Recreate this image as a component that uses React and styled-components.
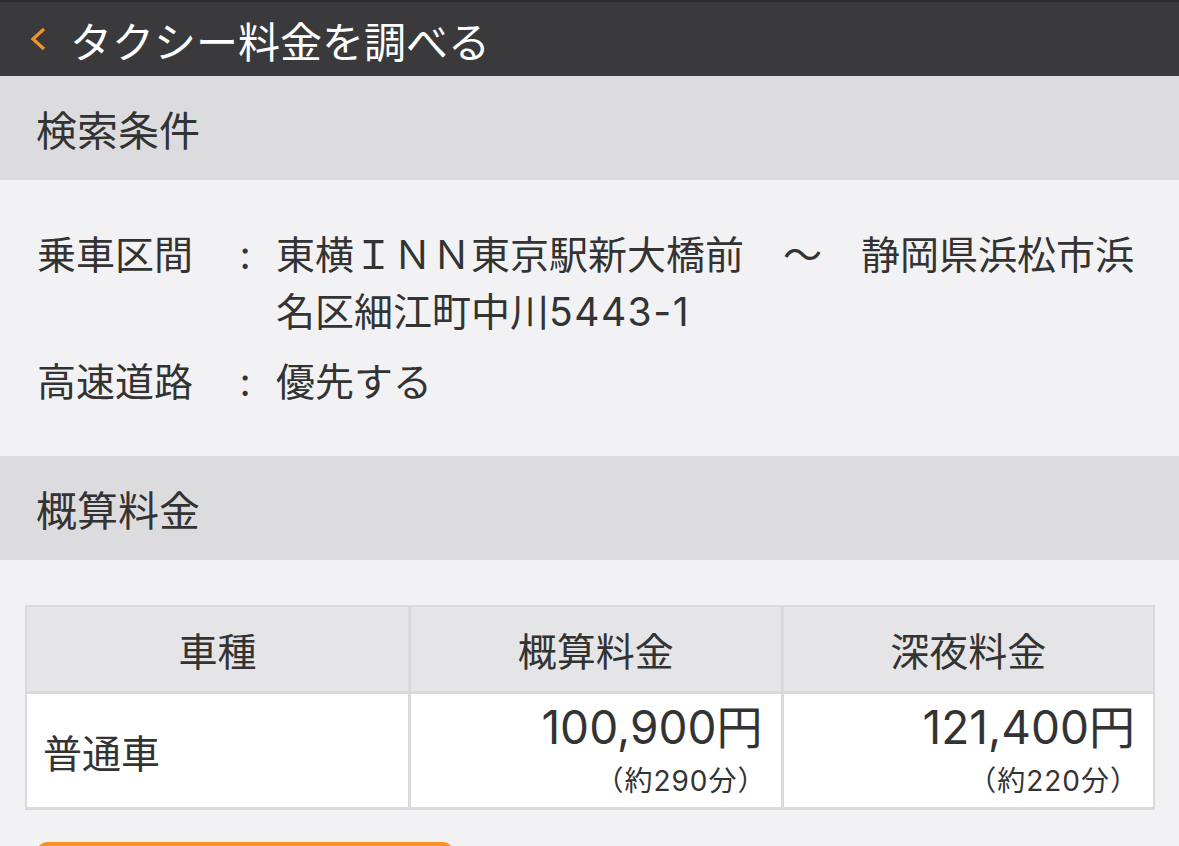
import React from 'react';
import styled, { createGlobalStyle } from 'styled-components';

const GlobalStyle = createGlobalStyle`
  html, body {
    margin: 0;
    padding: 0;
    background: #f2f2f4;
    font-family: Inter, "Noto Sans CJK JP", "Noto Sans", sans-serif;
    color: #333;
  }
`;

const Page = styled.div`
  width: 1179px;
  height: 846px;
  background: #f2f2f4;
  overflow: hidden;
`;

const TopBar = styled.header`
  height: 74px;
  display: flex;
  align-items: center;
  padding-left: 28px;
  background: #3a3a3c;
  border-top: 2px solid #2c2c2e;
`;

const BackIcon = styled.svg`
  width: 22px;
  height: 26px;
  margin-right: 20px;
`;

const Title = styled.h1`
  margin: 0;
  font-size: 42px;
  font-weight: 400;
  color: #fff;
`;

const SectionHeader = styled.div`
  height: ${p => p.$h}px;
  display: flex;
  align-items: center;
  padding-left: 36px;
  background: #dcdcde;
  font-size: 41px;
  color: #333;
`;

const Conditions = styled.div`
  padding: 46px 37px 46px 37px;
  display: flex;
  flex-direction: column;
  gap: 13px;
`;

const CondRow = styled.div`
  display: flex;
  font-size: 39px;
  line-height: 57px;
`;

const CondLabel = styled.div`
  width: 189px;
  flex-shrink: 0;
`;

const Colon = styled.div`
  width: 38px;
  margin-right: 12px;
  text-align: center;
  flex-shrink: 0;
`;

const CondValue = styled.div`
  flex: 1;
`;

const Digits = styled.span`
  letter-spacing: 1.5px;
`;

const FareArea = styled.div`
  padding: 45px 24px 0 25px;
`;

const Table = styled.div`
  display: grid;
  grid-template-columns: 381px 1fr 1fr;
  gap: 3px;
  padding: 2px 2px 3px 2px;
  background: #dadadc;
`;

const HeadCell = styled.div`
  height: 84px;
  display: flex;
  align-items: center;
  justify-content: center;
  background: #e5e5e7;
  font-size: 39px;
`;

const BodyCell = styled.div`
  height: 113px;
  display: flex;
  flex-direction: column;
  justify-content: ${p => (p.$price ? 'flex-start' : 'center')};
  align-items: ${p => (p.$price ? 'flex-end' : 'flex-start')};
  padding: ${p => (p.$price ? '8px 18px 0 0' : '0 0 0 16px')};
  background: #fff;
  font-size: 39px;
  box-sizing: border-box;
`;

const Price = styled.div`
  font-size: 46px;
  line-height: 50px;
`;

const Duration = styled.div`
  margin-top: 12px;
  margin-right: -4px;
  font-size: 28px;
  line-height: 34px;
  letter-spacing: 1px;
`;

const OrangeButton = styled.div`
  margin: 32px 0 0 12px;
  width: 416px;
  height: 60px;
  border-radius: 10px;
  background: #f7931e;
`;

const fares = [
  { type: '普通車', fare: '100,900円', fareTime: '（約290分）', night: '121,400円', nightTime: '（約220分）' },
];

export default function App() {
  return (
    <Page>
      <GlobalStyle />
      <TopBar>
        <BackIcon viewBox="0 0 22 26">
          <polyline points="16,3 5,13 16,23" fill="none" stroke="#f39325" strokeWidth="3.2" />
        </BackIcon>
        <Title>タクシー料金を調べる</Title>
      </TopBar>

      <SectionHeader $h={104}>検索条件</SectionHeader>
      <Conditions>
        <CondRow>
          <CondLabel>乗車区間</CondLabel>
          <Colon>:</Colon>
          <CondValue>
            東横ＩＮＮ東京駅新大橋前　～　静岡県浜松市浜名区細江町中川<Digits>5443-1</Digits>
          </CondValue>
        </CondRow>
        <CondRow>
          <CondLabel>高速道路</CondLabel>
          <Colon>:</Colon>
          <CondValue>優先する</CondValue>
        </CondRow>
      </Conditions>

      <SectionHeader $h={104}>概算料金</SectionHeader>
      <FareArea>
        <Table>
          <HeadCell>車種</HeadCell>
          <HeadCell>概算料金</HeadCell>
          <HeadCell>深夜料金</HeadCell>
          {fares.map(f => (
            <React.Fragment key={f.type}>
              <BodyCell>{f.type}</BodyCell>
              <BodyCell $price>
                <Price>{f.fare}</Price>
                <Duration>{f.fareTime}</Duration>
              </BodyCell>
              <BodyCell $price>
                <Price>{f.night}</Price>
                <Duration>{f.nightTime}</Duration>
              </BodyCell>
            </React.Fragment>
          ))}
        </Table>
        <OrangeButton />
      </FareArea>
    </Page>
  );
}
